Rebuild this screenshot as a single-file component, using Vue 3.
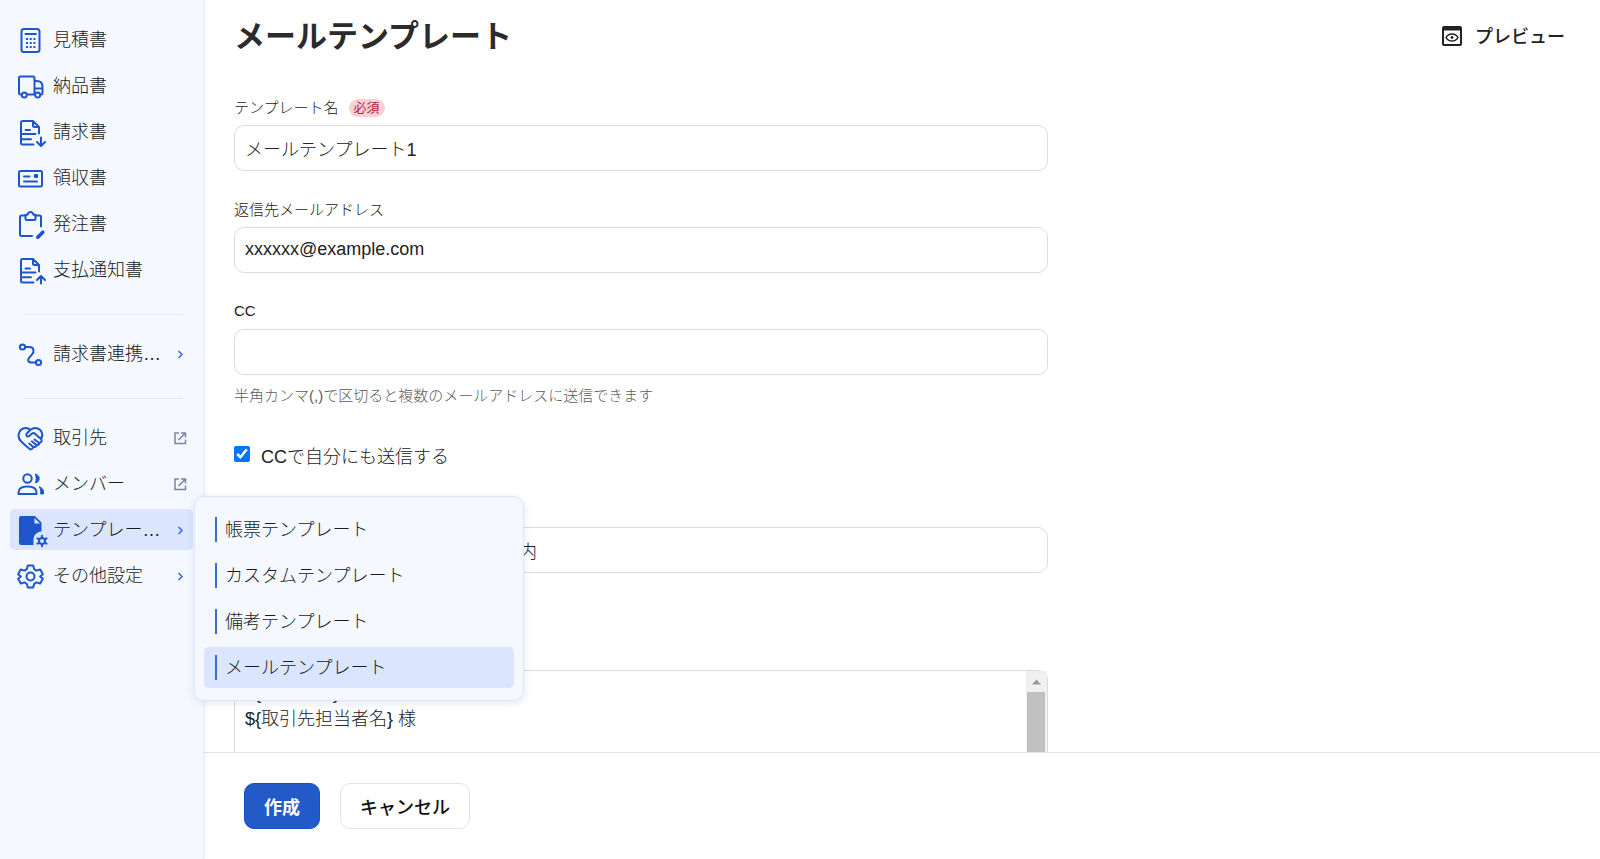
<script setup>
import { ref } from 'vue'

const documents = [
  { label: '見積書', icon: 'calc' },
  { label: '納品書', icon: 'truck' },
  { label: '請求書', icon: 'docDown' },
  { label: '領収書', icon: 'card' },
  { label: '発注書', icon: 'clip' },
  { label: '支払通知書', icon: 'docUp' },
]
const links = [{ label: '請求書連携サービス', icon: 'route', mark: 'chevron' }]
const settings = [
  { label: '取引先', icon: 'hands', mark: 'external' },
  { label: 'メンバー', icon: 'people', mark: 'external' },
  { label: 'テンプレート設定', icon: 'docGear', mark: 'chevron', active: true },
  { label: 'その他設定', icon: 'gear', mark: 'chevron' },
]
const groups = [documents, links, settings]

const submenu = [
  { label: '帳票テンプレート' },
  { label: 'カスタムテンプレート' },
  { label: '備考テンプレート' },
  { label: 'メールテンプレート', active: true },
]

const icons = {
  calc: '<rect x="4.500" y="2" width="18" height="23" rx="2.500"/><path d="M8.500 7h10.500"/><path d="M9 12h2m1.700 0h2m1.700 0h2M9 16h2m1.700 0h2m1.700 0h2M9 20h2m1.700 0h2m1.700 0h2" stroke-width="1.800" stroke-linecap="butt"/>',
  truck: '<path d="M4.200 21.500H3.500a1.500 1.500 0 0 1-1.500-1.500V5a1.500 1.500 0 0 1 1.500-1.500h12.500A1.500 1.500 0 0 1 17.500 5v16.500H10M17.500 8H20c3.500 0 5.500 2.500 5.500 6v6c0 1-.5 1.500-1.300 1.500M17.500 15.500h8"/><circle cx="7.300" cy="22" r="2.500" fill="#fff"/><circle cx="20.700" cy="22" r="2.500" fill="#fff"/>',
  docDown: '<path d="M16.500 25.500H5.500a1.500 1.500 0 0 1-1.500-1.500V3.500A1.500 1.500 0 0 1 5.500 2H16l6 6v6.500M16 2v4.500A1.500 1.500 0 0 0 17.500 8H22M8.500 11h4.500M4 15h14.500M4 20.200h10"/><path d="M24 18.500v8M20 23l4 4 4-4"/>',
  docUp: '<path d="M16.500 25.500H5.500a1.500 1.500 0 0 1-1.500-1.500V3.500A1.500 1.500 0 0 1 5.500 2H16l6 6v6.500M16 2v4.500A1.500 1.500 0 0 0 17.500 8H22M8.500 11.500h4.500M4 15.500h14.500M4 20.200h10"/><path d="M24 26.500v-7.500M20 23l4-4 4 4"/>',
  card: '<rect x="2" y="6" width="23" height="15.500" rx="1.500"/><path d="M7 11.500h5.500M7 16.500h13"/><circle cx="19" cy="11" r="1.300" fill="currentColor"/>',
  clip: '<path d="M8 4.500H4.500A1.500 1.500 0 0 0 3 6v17.500A1.500 1.500 0 0 0 4.500 25H15M19 4.500h3.500A1.500 1.500 0 0 1 24 6v9.500M8.500 3.800h2c.5-2 1.500-2.800 3-2.800s2.500.8 3 2.800h2v3.700a1.500 1.500 0 0 1-1.500 1.500h-7a1.500 1.500 0 0 1-1.500-1.500z"/><path d="M20.800 26.200l5-5" stroke-width="3.600"/>',
  route: '<circle cx="5.500" cy="6" r="2.600"/><circle cx="21.500" cy="21.500" r="2.600"/><path d="M8.200 6h4c5 0 5.500 4.500 2.500 7.800l-2 2.200c-2.700 3-1.700 5.500 2 5.500h4"/>',
  hands: '<path d="M8.500 20.500L3.800 16C1.500 13.500 1 10.500 2.200 7.500 4 3 9.500 1.500 13.500 4.800 17.500 1.500 23 3 24.800 7.500c.9 2.300.6 4.300-.8 6M13.500 4.800L9.800 8.500c-1.500 1.800.6 4 2.500 2.500l2.700-2.400c1-.8 2-.7 3 .2l6 5.200c1.500 1.500.4 3.700-1.500 3.700.2 1.600-1.400 2.700-2.900 2.100 0 1.700-1.600 2.700-3 2l-1.300 1.800c-1 1-2.200 1-3.200 0l-3.600-3.100M17.500 14.500l4.500 3.500M14.800 16.300l4.500 3.800M12.200 18.600l4 3.500"/>',
  people: '<circle cx="10.500" cy="7.500" r="4.200"/><path d="M1.500 23v-1.500c0-4 3.500-6 9-6s9 2 9 6V23z"/><path d="M18.500 3.200c2.300.4 3.700 2 3.700 4.300s-1.400 3.900-3.700 4.300c.9-2.800.9-5.800 0-8.600zM22.500 16c2.500.7 4 2.500 4 5V23H23.700c.3-2.800 0-5-1.200-7z" fill="currentColor" stroke-width="1"/>',
  gear: '<circle cx="13.500" cy="13.500" r="4"/><path d="M10.800 2.500h5.400l1 3.700 2.300 1.400 3.700-1.100 2.700 4.700-2.800 2.300v0l2.800 2.300-2.700 4.700-3.700-1.100-2.300 1.400-1 3.700h-5.400l-1-3.700-2.300-1.400-3.700 1.100-2.700-4.700 2.800-2.300-2.800-2.300 2.700-4.700 3.700 1.100 2.300-1.400z"/>',
  docGear: '<g transform="translate(1 -1)"><path d="M3 0h14l6.500 6.500v9C18 16 15 20 15.500 25v4H3a2 2 0 0 1-2-2V2a2 2 0 0 1 2-2z" fill="currentColor" stroke="none"/><path d="M16.500 2v5.500H22z" fill="#dbe6fe" stroke="none"/><circle cx="24" cy="25" r="3"/><path d="M24 19.800v2M24 28.200v2M19.400 22.400l1.800 1M26.800 26.600l1.800 1M19.400 27.600l1.800-1M26.800 23.400l1.800-1"/></g>',
}

const name = ref('メールテンプレート1')
const replyTo = ref('xxxxxx@example.com')
const cc = ref('')
const ccSelf = ref(true)
const subject = ref('${取引先名}様へ請求書送付のご案内')
const body = ref('${取引先名}\n${取引先担当者名} 様')
</script>

<template>
  <div class="app">
    <aside class="sidebar">
      <nav>
        <ul v-for="(group, g) in groups" :key="g" class="group">
          <li v-for="item in group" :key="item.label" class="entry">
            <a href="#" class="nav" :class="{ active: item.active }">
              <svg class="icon" viewBox="0 0 30 30" aria-hidden="true" v-html="icons[item.icon]"></svg>
              <span class="nav-label">{{ item.label }}</span>
              <svg v-if="item.mark === 'chevron'" class="mark chevron" viewBox="0 0 14 14" aria-hidden="true">
                <path d="M5.500 4l3.500 3.500L5.500 11" />
              </svg>
              <svg v-if="item.mark === 'external'" class="mark external" viewBox="0 0 14 14" aria-hidden="true">
                <path d="M6 2H2v10.500h10.500V8.500M8 2h4.500v4.500M12.500 2L5.500 9" />
              </svg>
            </a>
            <ul v-if="item.active" class="flyout">
              <li v-for="sub in submenu" :key="sub.label">
                <a href="#" class="sub" :class="{ active: sub.active }"><span>{{ sub.label }}</span></a>
              </li>
            </ul>
          </li>
        </ul>
      </nav>
    </aside>

    <main class="main">
      <div class="scroll">
        <header class="header">
          <h1>メールテンプレート</h1>
          <button type="button" class="preview">
            <svg viewBox="0 0 22 22" aria-hidden="true">
              <rect x="2" y="2" width="18" height="18" rx="1" />
              <path d="M2 4h18" stroke-width="3" />
              <path d="M5 12.500c1.300-2.300 3.300-3.500 6-3.500s4.700 1.200 6 3.500c-1.300 2.300-3.300 3.500-6 3.500s-4.700-1.200-6-3.500z" stroke-width="1.500" />
              <circle cx="11" cy="12.500" r="1.400" fill="currentColor" stroke="none" />
            </svg>
            <span>プレビュー</span>
          </button>
        </header>

        <form id="mail-form" class="form" @submit.prevent>
          <div class="field">
            <div class="label-row">
              <label for="name">テンプレート名</label>
              <span class="badge">必須</span>
            </div>
            <input id="name" v-model="name" type="text" class="input" />
          </div>
          <div class="field">
            <div class="label-row"><label for="reply">返信先メールアドレス</label></div>
            <input id="reply" v-model="replyTo" type="email" class="input" />
          </div>
          <div class="field">
            <div class="label-row"><label for="cc">CC</label></div>
            <input id="cc" v-model="cc" type="text" class="input" aria-describedby="cc-help" />
            <p id="cc-help" class="help">半角カンマ(,)で区切ると複数のメールアドレスに送信できます</p>
          </div>
          <label class="check">
            <input v-model="ccSelf" type="checkbox" />
            <span>CCで自分にも送信する</span>
          </label>
          <input v-model="subject" type="text" class="input subject" aria-label="件名" />
          <div class="area">
            <textarea v-model="body" aria-label="本文"></textarea>
            <div class="bar" aria-hidden="true">
              <svg viewBox="0 0 21 21"><path d="M6 13.500l4.500-5 4.500 5z" /></svg>
              <div class="thumb"></div>
            </div>
          </div>
        </form>
      </div>

      <footer class="footer">
        <button type="submit" form="mail-form" class="btn primary">作成</button>
        <button type="button" class="btn">キャンセル</button>
      </footer>
    </main>
  </div>
</template>

<style>
body {
  margin: 0;
}
</style>

<style scoped>
.app {
  display: flex;
  height: 100vh;
  font-family: "Liberation Sans", "Noto Sans CJK JP", sans-serif;
  font-size: 18px;
  font-weight: 300;
  color: #222;
  background: #fff;
}
.app * {
  box-sizing: border-box;
}
ul {
  list-style: none;
  margin: 0;
  padding: 0;
}
button,
input,
textarea {
  font: inherit;
  color: inherit;
}
.sidebar {
  position: relative;
  z-index: 2;
  flex: 0 0 204px;
  padding: 19px 10px;
  background: #f5f8ff;
  border-right: 1px solid #e3edfd;
  box-shadow: 1px 0 4px rgba(60, 90, 160, 0.08);
}
.group {
  display: flex;
  flex-direction: column;
  gap: 5px;
}
.group + .group::before {
  content: "";
  height: 1px;
  margin: 24px 10px 13px 14px;
  background: #dfeafd;
}
.entry {
  position: relative;
}
.nav {
  display: flex;
  align-items: center;
  height: 41px;
  padding: 0 6px 0 7px;
  border-radius: 5px;
  color: #181b22;
  text-decoration: none;
}
.nav.active,
.sub.active {
  background: #dbe6fe;
}
.icon {
  flex: 0 0 30px;
  height: 30px;
  margin-top: 4px;
  margin-right: 6px;
  overflow: visible;
  color: #1d55cc;
  fill: none;
  stroke: currentColor;
  stroke-width: 2;
  stroke-linecap: round;
  stroke-linejoin: round;
}
.nav-label {
  flex: 0 1 112px;
  min-width: 0;
  overflow: hidden;
  white-space: nowrap;
  text-overflow: ellipsis;
  line-height: 28px;
}
.mark {
  flex: 0 0 14px;
  height: 14px;
  margin-left: auto;
  fill: none;
  stroke-width: 2;
}
.chevron {
  stroke: #2f6bea;
  stroke-width: 1.500;
}
.external {
  stroke: #7886a3;
  stroke-width: 1.500;
}
.flyout {
  position: absolute;
  top: -13px;
  left: 184px;
  width: 330px;
  display: flex;
  flex-direction: column;
  gap: 5px;
  padding: 12px 9px;
  background: #f5f8ff;
  border: 1px solid #dbe8fc;
  border-radius: 10px;
  box-shadow: 0 2px 8px rgba(60, 90, 160, 0.14);
}
.sub {
  display: flex;
  align-items: center;
  height: 41px;
  padding-left: 11px;
  border-radius: 5px;
  color: #181b22;
  text-decoration: none;
}
.sub span {
  padding-bottom: 4px;
}
.sub::before {
  content: "";
  width: 2px;
  height: 25px;
  margin-right: 8px;
  background: #3b6bd3;
}
.main {
  flex: 1;
  min-width: 0;
  display: flex;
  flex-direction: column;
}
.scroll {
  flex: 1;
  min-height: 0;
  overflow-y: auto;
  scrollbar-width: none;
  padding: 12px 35px 30px 30px;
}
.header {
  display: flex;
  align-items: center;
  justify-content: space-between;
  height: 48px;
  margin-bottom: 35px;
}
h1 {
  margin: 0;
  padding-bottom: 6px;
  font-size: 31px;
  font-weight: 700;
  color: #2b2b2b;
}
.preview {
  display: flex;
  align-items: center;
  gap: 12px;
  padding: 0;
  border: 0;
  background: none;
  font-weight: 500;
}
.preview span,
.btn {
  padding-bottom: 2px;
}
.preview svg {
  width: 22px;
  height: 22px;
  fill: none;
  stroke: currentColor;
  stroke-width: 2;
}
.form {
  display: flex;
  flex-direction: column;
  width: 65%;
  min-width: 400px;
  max-width: 814px;
}
.field {
  margin-bottom: 26px;
}
.label-row {
  display: flex;
  align-items: center;
  gap: 10px;
  height: 22px;
  margin-bottom: 8px;
  font-size: 15px;
  color: #222;
}
.badge {
  align-self: flex-end;
  padding: 0 5px;
  border-radius: 9px;
  background: #f9d0d6;
  color: #b3263c;
  font-size: 13px;
  font-weight: 400;
  line-height: 18px;
}
.input {
  display: block;
  width: 100%;
  height: 46px;
  padding: 0 10px 1px;
  border: 1px solid #dcdcdc;
  border-radius: 10px;
  background: #fff;
}
.help {
  margin: 9px 0 0;
  font-size: 15px;
  line-height: 24px;
  color: #5b5b5b;
}
.check {
  display: flex;
  align-items: center;
  gap: 11px;
  height: 30px;
  margin: 6px 0 0;
}
.check input {
  width: 16px;
  height: 16px;
  margin: 0 0 2px;
}
.subject {
  margin-top: 57px;
}
.area {
  display: flex;
  height: 270px;
  margin-top: 97px;
  border: 1px solid #dcdcdc;
  border-radius: 10px;
}
.area textarea {
  flex: 1;
  min-width: 0;
  padding: 9px 10px;
  border: 0;
  background: none;
  line-height: 26px;
  resize: none;
}
.bar {
  display: flex;
  flex-direction: column;
  width: 21px;
  background: #f0f0f0;
}
.bar svg {
  height: 21px;
  fill: #9a9a9a;
}
.thumb {
  flex: 0 0 180px;
  margin: 0 2px 0 1px;
  background: #c1c1c1;
}
.footer {
  display: flex;
  gap: 20px;
  padding: 30px 40px;
  border-top: 1px solid #e3e3e3;
  background: #fff;
}
.btn {
  height: 46px;
  padding-right: 19px;
  padding-left: 19px;
  border: 1px solid #e3e3e3;
  border-radius: 10px;
  background: #fff;
  color: #111;
  font-weight: 500;
}
.btn.primary {
  border-color: #1650c8;
  background: #2459c8;
  color: #fff;
  font-weight: 700;
}
</style>
